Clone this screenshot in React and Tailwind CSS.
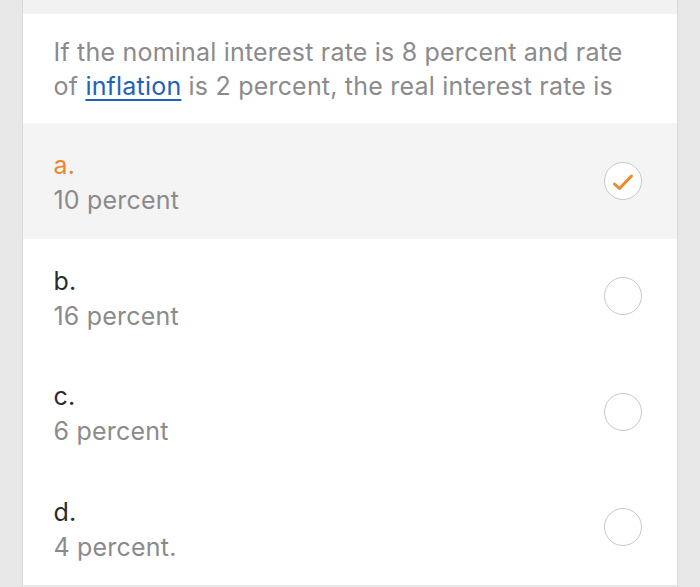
import React from "react";

const options = [
  { key: "a.", text: "10 percent", selected: true },
  { key: "b.", text: "16 percent" },
  { key: "c.", text: "6 percent" },
  { key: "d.", text: "4 percent." },
];

function Radio({ selected }) {
  return (
    <div className="w-[38px] h-[38px] rounded-full border-[1.5px] border-[#c8c8c8] bg-white flex items-center justify-center shrink-0">
      {selected && (
        <svg width="24" height="20" viewBox="0 0 24 20" fill="none" className="mt-[2px]">
          <path
            d="M3.5 12 L8.5 16.5 L20.5 4"
            stroke="#ee8a2c"
            strokeWidth="3"
            strokeLinecap="round"
            strokeLinejoin="round"
          />
        </svg>
      )}
    </div>
  );
}

export default function App() {
  return (
    <div
      className="w-[700px] h-[587px] overflow-hidden bg-[#e7e7e7] flex justify-center"
      style={{ fontFamily: "Inter, 'Noto Sans', sans-serif" }}
    >
      <div className="w-[656px] ml-[-1px] border-l border-r border-[#d9d9d9] flex flex-col">
        <div className="h-[14px] bg-[#f2f2f2]" />
        <div className="bg-white pl-[31px] pr-[40px] pt-[21px] pb-[20px] text-[25px] leading-[34px] tracking-[0.2px] text-[#8b8b8b]">
          If the nominal interest rate is 8 percent and rate of{" "}
          <span className="text-[#1f63b8] underline decoration-[1.5px] underline-offset-[4px]">
            inflation
          </span>{" "}
          is 2 percent, the real interest rate is
        </div>
        {options.map((o) => (
          <div
            key={o.key}
            className={`h-[115.5px] flex items-center justify-between pl-[31px] pr-[35px] ${
              o.selected ? "bg-[#f4f4f4]" : "bg-white"
            }`}
          >
            <div className="text-[25px] leading-[35px] tracking-[0.2px] pt-[5px]">
              <div className={o.selected ? "text-[#ec8630]" : "text-[#2b2b2b]"}>{o.key}</div>
              <div className="text-[#8b8b8b]">{o.text}</div>
            </div>
            <Radio selected={o.selected} />
          </div>
        ))}
      </div>
    </div>
  );
}
